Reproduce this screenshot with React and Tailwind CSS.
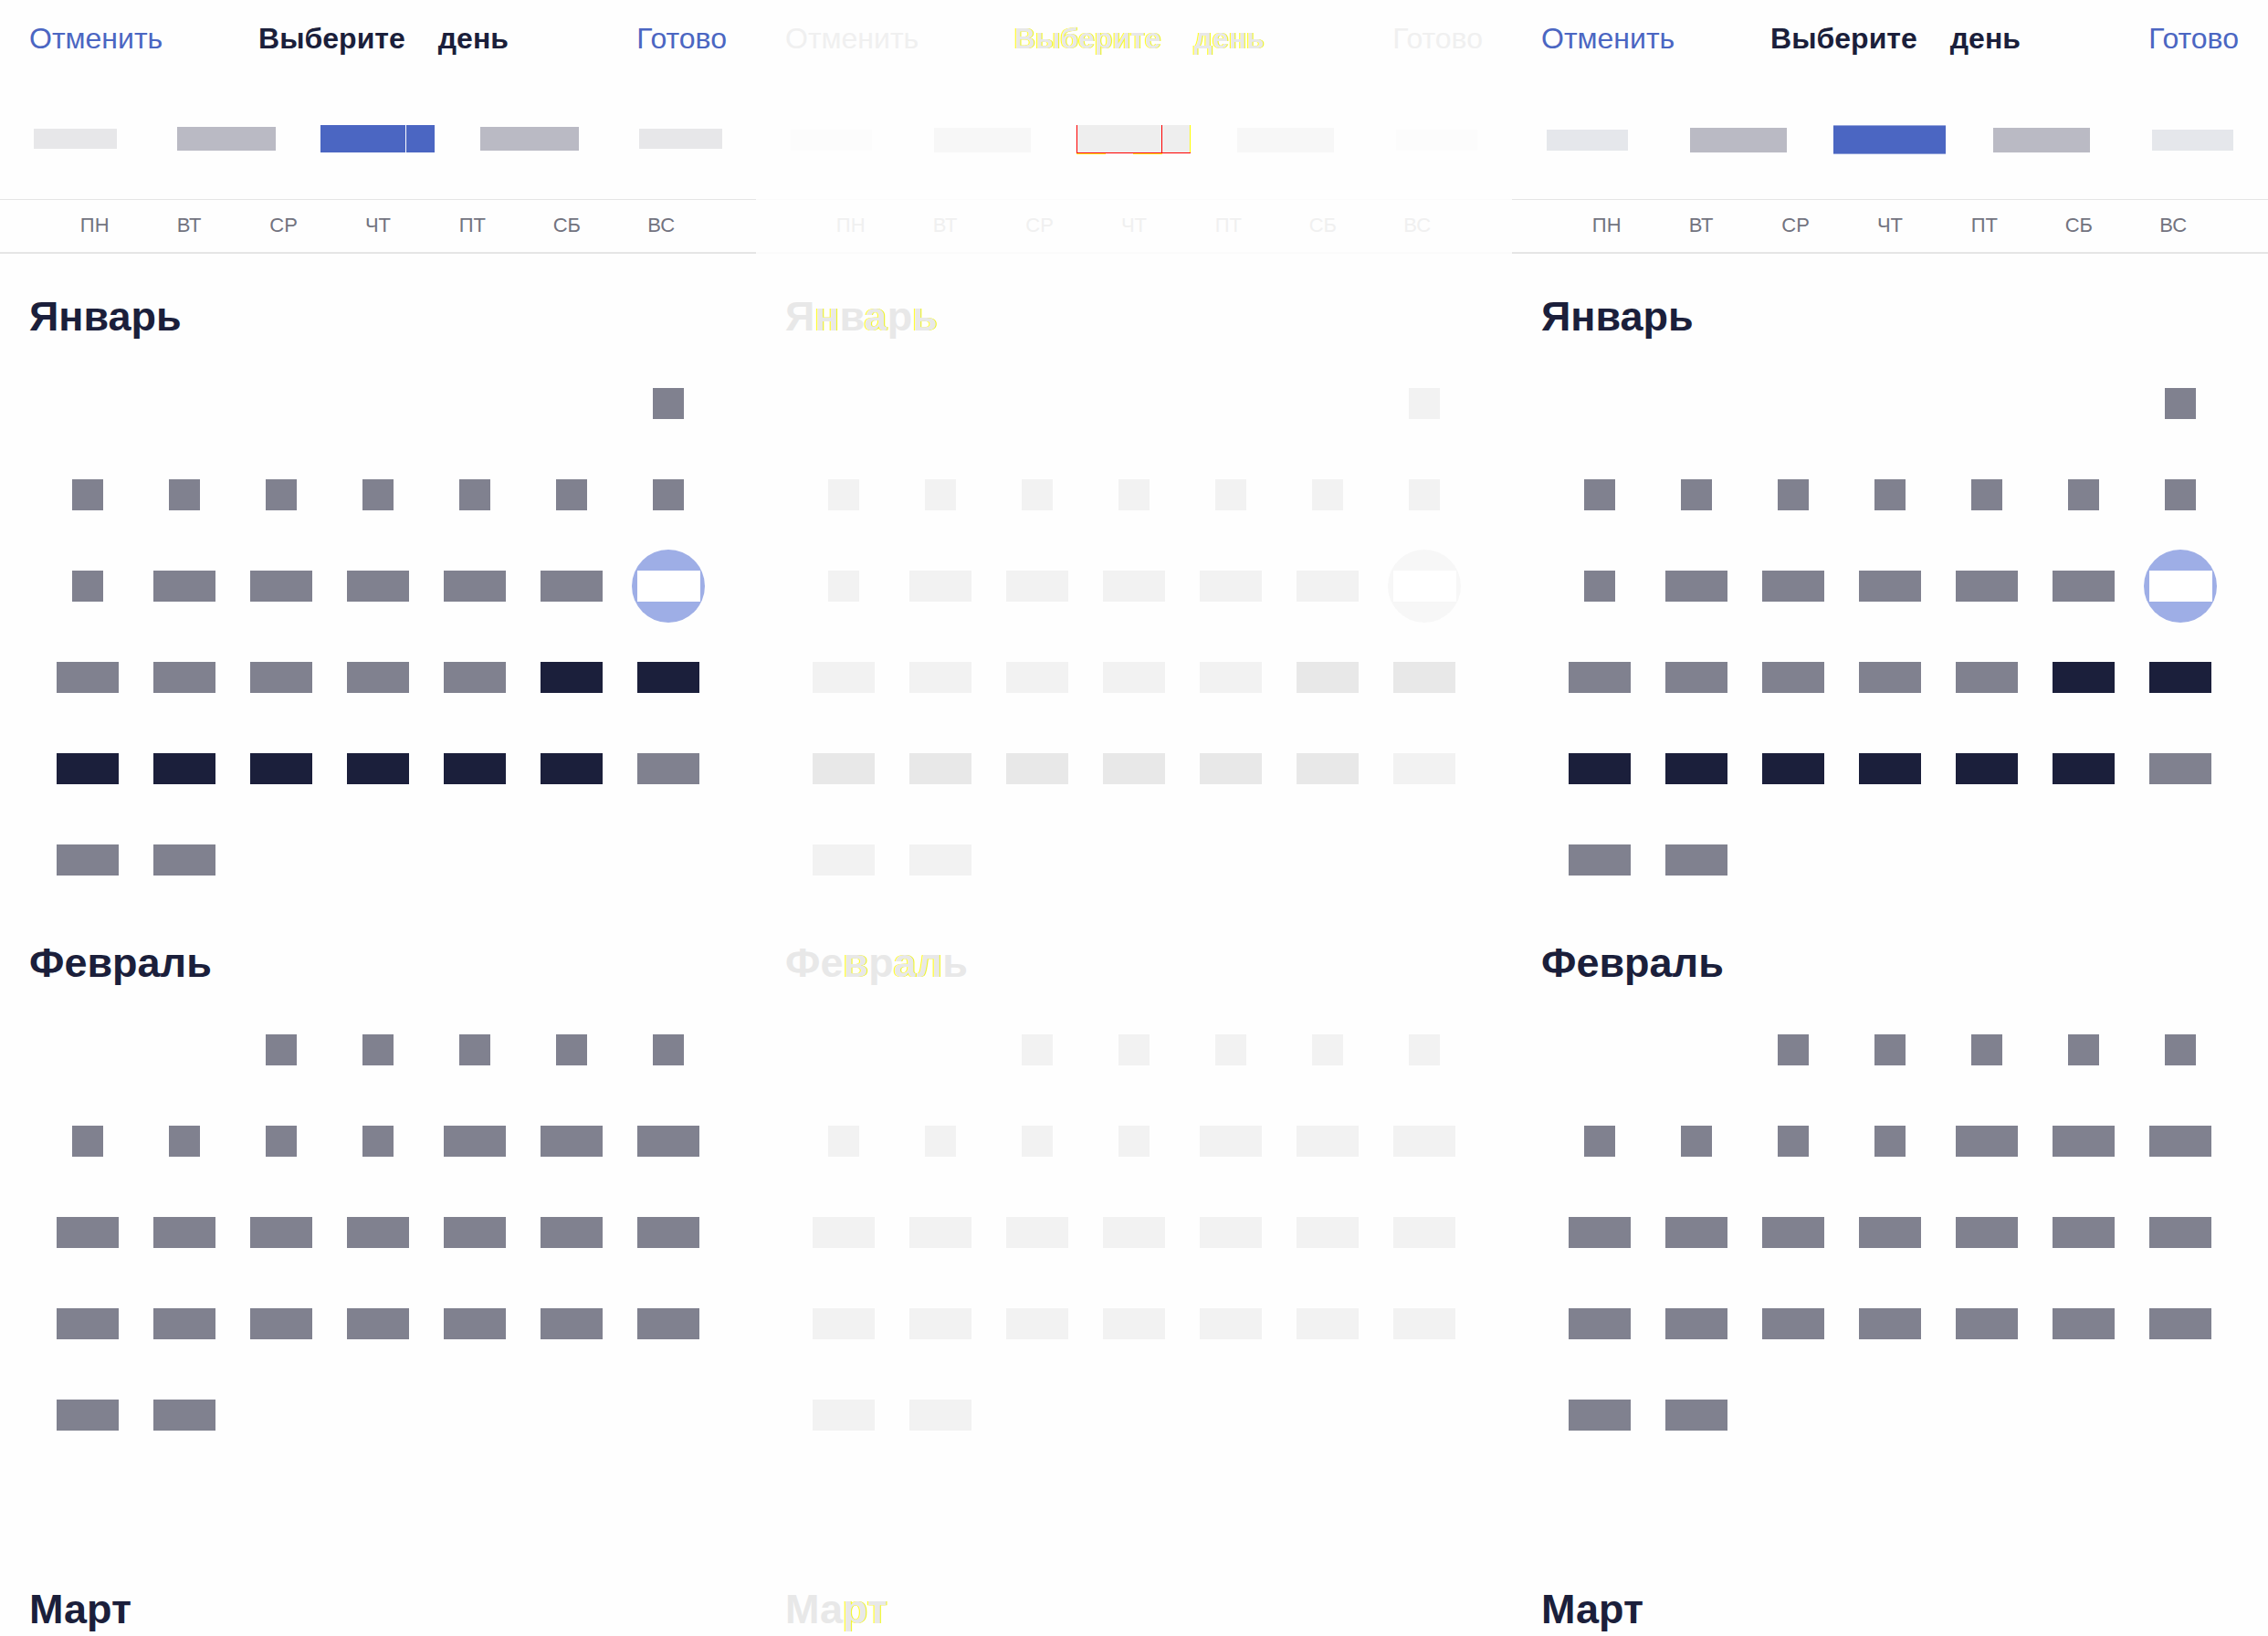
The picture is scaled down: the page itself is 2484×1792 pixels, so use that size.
const WEEKDAYS = ["ПН", "ВТ", "СР", "ЧТ", "ПТ", "СБ", "ВС"];

// "fringed" lists the letters that carry a yellow edge in the difference panel.
const MONTHS = [
  { name: "Январь", offset: 6, days: 31, fringed: [1, 3, 5], disabled: (d) => d < 21 || d > 28, selected: 15 },
  { name: "Февраль", offset: 2, days: 28, fringed: [2, 4, 5], disabled: () => true },
  { name: "Март", offset: 2, days: 0, fringed: [2, 3], disabled: () => true },
];

const THEMES = {
  before: {
    link: "text-[#4b66c2]",
    title: "text-[#1b1f3b]",
    weekday: "text-[#72737f]",
    line: "border-[#e5e5e5]",
    muted: "bg-[#80818f]",
    active: "bg-[#1b1f3b]",
    circle: "bg-[#9eaee6]",
    wheel: "pt-[2px]",
    far: "h-[22px] w-[91px] bg-[#e7e7e9]",
    near: "h-[26px] w-[108px] bg-[#babac4]",
    current: "h-[30px] w-[125px] bg-[#4b66c2]",
  },
  difference: {
    link: "text-[#f0f0f0]",
    title: "text-[#e8e8e8]",
    weekday: "text-[#f0f0f0]",
    line: "border-[#fbfbfb]",
    muted: "bg-[#f2f2f2]",
    active: "bg-[#e8e8e8]",
    circle: "bg-[#f7f7f7]",
    wheel: "pt-[4px]",
    far: "h-[23px] w-[89px] bg-[#fcfcfc]",
    near: "h-[27px] w-[106px] bg-[#f7f7f7]",
    current: "h-[32px] w-[125px]",
  },
  after: {
    link: "text-[#4b66c2]",
    title: "text-[#1b1f3b]",
    weekday: "text-[#72737f]",
    line: "border-[#e5e5e5]",
    muted: "bg-[#80818f]",
    active: "bg-[#1b1f3b]",
    circle: "bg-[#9eaee6]",
    wheel: "pt-[4px]",
    far: "h-[23px] w-[89px] bg-[#e5e7eb]",
    near: "h-[27px] w-[106px] bg-[#babac4]",
    current: "h-[32px] w-[123px] border-y border-[#93a3da] bg-[#4b66c2]",
  },
};

function Header({ theme, diff }) {
  return (
    <header className="grid h-[84px] grid-cols-[148px_1fr_136px] items-center px-8">
      <button type="button" className={`text-left text-[32px] leading-none ${theme.link}`}>Отменить</button>
      <h1
        className={`flex justify-center gap-9 text-[32px] leading-none font-bold ${theme.title} ${
          diff ? "[text-shadow:-1px_0_#ffff00,1px_0_#ffff00]" : ""
        }`}
      >
        <span>Выберите</span>
        <span>день</span>
      </h1>
      <button type="button" className={`text-right text-[32px] leading-none ${theme.link}`}>Готово</button>
    </header>
  );
}

function CurrentBar({ theme, kind }) {
  if (kind === "before") {
    return (
      <button type="button" aria-label="3" className="flex h-[30px] w-[125px] gap-px">
        <span className="h-full w-[93px] bg-[#4b66c2]" />
        <span className="h-full flex-1 bg-[#4b66c2]" />
      </button>
    );
  }
  if (kind === "difference") {
    return (
      <button type="button" aria-label="3" className="flex h-[32px] w-[125px] flex-col">
        <span className="flex h-[30px] w-full border-r border-l border-r-[#ffff00] border-l-[#ff0000] bg-[#eeeeee]">
          <span className="h-full w-[93px] border-r border-[#ff0000]" />
        </span>
        <span className="h-px w-full bg-[#ff0000]" />
        <span className="flex h-px w-full justify-between pr-[31px]">
          <span className="h-px w-[32px] bg-[#ffff00]" />
          <span className="h-px w-[32px] bg-[#ffff00]" />
        </span>
      </button>
    );
  }
  return <button type="button" aria-label="3" className={theme.current} />;
}

function Wheel({ theme, kind }) {
  return (
    <div className={`grid h-[134px] grid-cols-5 place-items-center ${theme.wheel}`}>
      <button type="button" aria-label="1" className={theme.far} />
      <button type="button" aria-label="2" className={theme.near} />
      <CurrentBar theme={theme} kind={kind} />
      <button type="button" aria-label="4" className={theme.near} />
      <button type="button" aria-label="5" className={theme.far} />
    </div>
  );
}

function Weekdays({ theme }) {
  return (
    <div className={`flex h-[60px] items-center border-t border-b-2 px-[52px] pb-0.5 text-[22px] leading-none ${theme.line} ${theme.weekday}`}>
      {WEEKDAYS.map((d) => (
        <span key={d} className="flex-1 text-center">{d}</span>
      ))}
    </div>
  );
}

function Day({ day, month, theme }) {
  if (day === month.selected) {
    return (
      <button type="button" aria-label={String(day)} className={`grid size-20 place-items-center rounded-full ${theme.circle}`}>
        <span className="h-[34px] w-[69px] bg-white" />
      </button>
    );
  }
  return (
    <button
      type="button"
      aria-label={String(day)}
      className={`h-[34px] ${day < 10 ? "w-[34px]" : "w-[68px]"} ${month.disabled(day) ? theme.muted : theme.active}`}
    />
  );
}

function Month({ month, theme, diff }) {
  const days = Array.from({ length: month.days }, (_, i) => i + 1);
  return (
    <section>
      <h2 className={`h-[108px] px-8 pt-8 text-[45px] leading-[62px] font-bold ${theme.title}`}>
        {diff
          ? [...month.name].map((c, i) => (
              <span key={i} className={month.fringed.includes(i) ? "[text-shadow:-1px_0_#ffff00,1px_0_#ffff00]" : ""}>{c}</span>
            ))
          : month.name}
      </h2>
      <div className="grid min-h-[600px] auto-rows-[100px] grid-cols-7 place-items-center px-[43px]">
        {Array.from({ length: month.offset }, (_, i) => (
          <span key={`empty-${i}`} />
        ))}
        {days.map((d) => (
          <Day key={d} day={d} month={month} theme={theme} />
        ))}
      </div>
    </section>
  );
}

function DatePicker({ kind }) {
  const theme = THEMES[kind];
  const diff = kind === "difference";
  return (
    <article>
      <Header theme={theme} diff={diff} />
      <Wheel theme={theme} kind={kind} />
      <Weekdays theme={theme} />
      <div className="pt-1.5">
        {MONTHS.map((m) => (
          <Month key={m.name} month={m} theme={theme} diff={diff} />
        ))}
      </div>
    </article>
  );
}

export default function App() {
  return (
    <main className="grid h-screen grid-cols-3 overflow-hidden bg-[#fefefe] font-['Liberation_Sans',Arial,sans-serif]">
      <DatePicker kind="before" />
      <DatePicker kind="difference" />
      <DatePicker kind="after" />
    </main>
  );
}
